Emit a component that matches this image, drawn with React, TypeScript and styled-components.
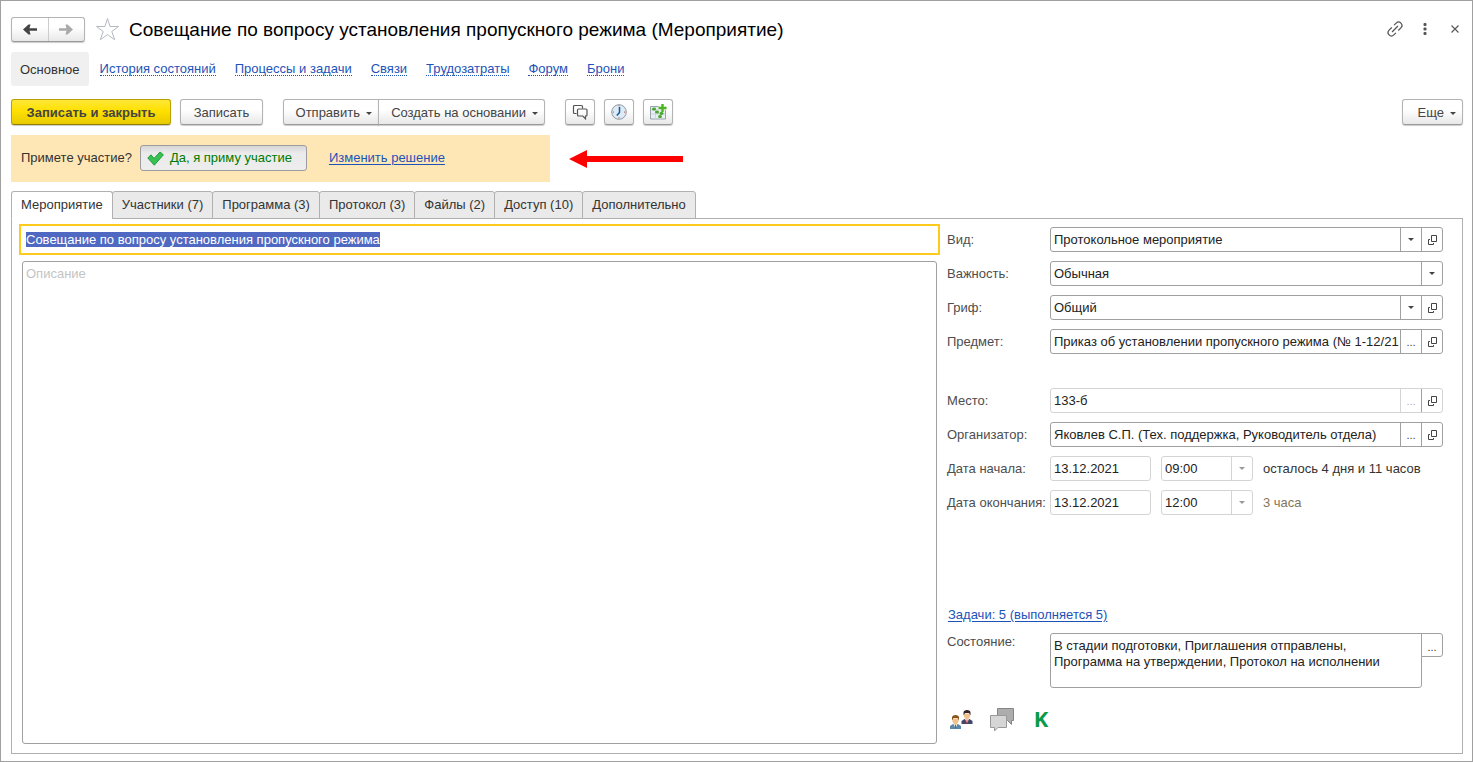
import React, { useEffect, useRef } from "react";
import styled, { createGlobalStyle, css } from "styled-components";

const GlobalStyle = createGlobalStyle`
  *, *::before, *::after { box-sizing: border-box; }
  body { margin: 0; background: #fff; }
  body, button, input, select, textarea {
    font-family: "Liberation Sans", Arial, sans-serif;
    font-size: 13px;
    line-height: 16px;
    color: #333;
  }
  button, input, select, textarea { margin: 0; border-radius: 0; outline: none; }
  svg { display: block; flex: none; }
`;

const Window = styled.div`
  display: flex;
  flex-direction: column;
  min-height: 100vh;
  padding: 16px 9px 7px 10px;
  border: 1px solid #a0a0a0;
  background: #fff;
`;

const TitleBar = styled.header`
  display: flex;
  align-items: flex-start;
  height: 25px;
  margin-right: -7px;
`;

const raised = css`
  border: 1px solid #b3b3b3;
  border-bottom-color: #999;
  border-radius: 3px;
  background: linear-gradient(#fff 40%, #e8e8e8);
  box-shadow: 0 1px 1px rgba(0, 0, 0, 0.2);
`;

const History = styled.div`
  ${raised}
  display: flex;
  width: 74px;
  height: 25px;
`;

const HistoryButton = styled.button`
  display: flex;
  flex: 1;
  align-items: center;
  justify-content: center;
  padding: 0;
  border: 0;
  background: none;
  & + & { border-left: 1px solid #ccc; }
`;

const IconButton = styled.button`
  display: flex;
  align-items: center;
  justify-content: center;
  width: 30px;
  height: 24px;
  padding: 0;
  border: 0;
  background: none;
`;

const StarButton = styled(IconButton)`
  width: 24px;
  margin: 0 10px;
`;

const Title = styled.h1`
  flex: 1;
  margin: 0;
  font-size: 19px;
  line-height: 25px;
  font-weight: 400;
  color: #000;
`;

const Nav = styled.nav`
  display: flex;
  align-items: center;
  gap: 19px;
  height: 34px;
  margin-top: 10px;
`;

const NavCurrent = styled.span`
  margin-right: -8px;
  padding: 10px 9px 8px;
  border-radius: 3px;
  background: #f0f0f0;
`;

const NavLink = styled.a`
  padding-top: 1px;
  border-bottom: 1px dotted #1d53b8;
  line-height: 12px;
  color: #1d53b8;
  text-decoration: none;
`;

const Toolbar = styled.div`
  display: flex;
  height: 26px;
  margin-top: 13px;
`;

const Button = styled.button<{ $primary?: boolean; $width: number }>`
  ${raised}
  display: flex;
  align-items: center;
  justify-content: center;
  gap: 6px;
  width: ${(p) => p.$width}px;
  padding: 2px 0 0;
  color: #444;
  white-space: nowrap;
  ${(p) =>
    p.$primary &&
    css`
      border-color: #b9a000;
      border-bottom-color: #8f7c00;
      background: linear-gradient(#ffe838, #ffe000 45%, #e8cb00);
      font-weight: 700;
    `}
`;

const MenuButton = styled(Button)`
  justify-content: flex-end;
  padding-right: 6px;
`;

const ToolButton = styled(Button)`
  padding: 0;
`;

const ToolGroup = styled.div<{ $joined?: boolean; $start?: number }>`
  display: flex;
  gap: ${(p) => (p.$joined ? 0 : 9)}px;
  margin-left: ${(p) => p.$start ?? 0}px;
  ${(p) =>
    p.$joined &&
    css`
      & > :first-child { border-radius: 3px 0 0 3px; }
      & > :last-child { border-radius: 0 3px 3px 0; margin-left: -1px; }
    `}
`;

const MoreButton = styled(MenuButton)`
  margin-left: auto;
`;

const InviteRow = styled.section`
  display: flex;
  align-items: center;
  gap: 19px;
  margin-top: 10px;
`;

const Invite = styled.div`
  display: flex;
  align-items: center;
  width: 539px;
  height: 47px;
  padding: 0 0 1px 10px;
  background: #ffe7b5;
`;

const AcceptButton = styled.button`
  display: flex;
  align-items: center;
  gap: 6px;
  width: 167px;
  height: 26px;
  margin: 0 22px 0 8px;
  padding: 0 6px;
  border: 1px solid #9c9ca0;
  border-radius: 3px;
  background: linear-gradient(#d6d6d6, #ebebeb 30%, #ededed);
  color: #007a00;
  white-space: nowrap;
`;

const Link = styled.a`
  color: #1d53b8;
  text-decoration: underline;
  text-underline-offset: 2px;
`;

const Tabs = styled.div`
  display: flex;
  height: 28px;
  margin-top: 9px;
  margin-bottom: -1px;
`;

const Tab = styled.button<{ $active?: boolean }>`
  padding: 0 9px;
  border: 1px solid #b0b0b0;
  border-bottom-color: ${(p) => (p.$active ? "#fff" : "#b0b0b0")};
  border-radius: 3px 3px 0 0;
  background: ${(p) => (p.$active ? "#fff" : "#eaeaea")};
  white-space: nowrap;
  position: relative;
  & + & { margin-left: -1px; }
`;

const Panel = styled.main`
  display: grid;
  grid-template-columns: minmax(0, 1fr) 496px;
  gap: 7px;
  flex: 1;
  padding: 5px 19px 9px 7px;
  border: 1px solid #b0b0b0;
`;

const TextColumn = styled.div`
  display: flex;
  flex-direction: column;
`;

const NameInput = styled.input`
  height: 31px;
  padding: 0 5px;
  border: 2px solid #fccb1c;
  &::selection { background: #4f69c2; color: #fff; }
`;

const Description = styled.textarea`
  flex: 1;
  margin: 6px 3px 0;
  padding: 4px 3px;
  border: 1px solid #a0a0a0;
  border-radius: 3px;
  resize: none;
  &::placeholder { color: #c4c4c4; opacity: 1; }
`;

const Details = styled.div`
  display: flex;
  flex-direction: column;
  gap: 9px;
  padding-top: 3px;
`;

const Row = styled.div<{ $spaced?: boolean; $top?: boolean }>`
  display: flex;
  align-items: ${(p) => (p.$top ? "flex-start" : "center")};
  margin-top: ${(p) => (p.$spaced ? 25 : 0)}px;
`;

const Label = styled.label`
  flex: none;
  width: 103px;
  color: #4d4d4d;
  white-space: nowrap;
`;

const Field = styled.div<{ $muted?: boolean; $width?: number }>`
  --line: ${(p) => (p.$muted ? "#d4d4d4" : "#a0a0a0")};
  display: flex;
  flex: ${(p) => (p.$width ? "none" : "1")};
  width: ${(p) => (p.$width ? p.$width + "px" : "auto")};
  min-width: 0;
  height: 25px;
  border: 1px solid var(--line);
  border-radius: 3px;
  background: #fff;
  & + & { margin-left: 10px; }
`;

const control = css`
  flex: 1;
  min-width: 0;
  width: 100%;
  padding: 0 0 0 3px;
  border: 0;
  background: none;
  color: #222;
  opacity: 1;
`;

const TextInput = styled.input`
  ${control}
`;

const SelectBox = styled.div`
  position: relative;
  display: flex;
  flex: 1;
  min-width: 0;
`;

const Select = styled.select`
  ${control}
  appearance: none;
  padding-right: 24px;
`;

const cell = css`
  display: flex;
  align-items: center;
  justify-content: center;
  width: 21px;
  padding: 0;
  border: 0;
  border-left: 1px solid var(--line);
`;

const SelectArrow = styled.span<{ $muted?: boolean }>`
  ${cell}
  position: absolute;
  top: 0;
  right: 0;
  bottom: 0;
  color: ${(p) => (p.$muted ? "#999" : "#444")};
  pointer-events: none;
`;

const CellButton = styled.button<{ $strong?: boolean }>`
  ${cell}
  flex: none;
  border-left-color: ${(p) => (p.$strong ? "#a0a0a0" : "var(--line)")};
  background: none;
  font-size: 11px;
  color: #444;
  &:disabled { color: #aaa; }
`;

const Remark = styled.span<{ $muted?: boolean }>`
  margin-left: 10px;
  color: ${(p) => (p.$muted ? "#857558" : "#333")};
  white-space: nowrap;
`;

const TasksLine = styled.div`
  margin-top: 83px;
  padding: 0 1px 1px;
`;

const StateLabel = styled(Label)`
  line-height: 18px;
`;

const StateText = styled.textarea`
  flex: 1;
  height: 55px;
  padding: 4px 3px;
  border: 1px solid #a0a0a0;
  border-radius: 3px 0 3px 3px;
  color: #222;
  resize: none;
  overflow: hidden;
`;

const StateButton = styled.button`
  width: 22px;
  height: 24px;
  margin-left: -1px;
  padding: 4px 0 0;
  border: 1px solid #a0a0a0;
  border-radius: 0 3px 3px 0;
  background: #fff;
  font-size: 11px;
`;

const Shortcuts = styled.div`
  display: flex;
  gap: 16px;
  height: 24px;
  margin-top: 11px;
  padding-left: 1px;
`;

const Shortcut = styled.button`
  display: flex;
  align-items: center;
  justify-content: center;
  width: 25px;
  height: 24px;
  padding: 0;
  border: 0;
  background: none;
`;

const BrandShortcut = styled(Shortcut)`
  align-items: flex-start;
  width: 22px;
  font-family: "Open Sans", sans-serif;
  font-size: 22px;
  line-height: 20px;
  font-weight: 700;
  color: #0b9a4b;
`;

const Caret = ({ size = 6 }: { size?: number }) => (
  <svg width={size} height="3" viewBox="0 0 6 3">
    <path d="M0 0h6L3 3z" fill="currentColor" />
  </svg>
);

const BackArrow = ({ color, flip }: { color: string; flip?: boolean }) => (
  <svg width="14" height="11" viewBox="0 0 14 11">
    <g transform={flip ? "matrix(-1 0 0 1 14 0)" : undefined}>
      <path d="M0 5.500 5.500.5h2L6.500 4.200H14v2.600H6.500l1 3.700h-2z" fill={color} />
    </g>
  </svg>
);

const StarIcon = () => (
  <svg width="24" height="24" viewBox="0 0 24 24">
    <path
      d="M12.500 1.500 15 9.500h8.500L16.800 14.500l2.900 8.300-7.200-5.200-7.200 5.200 2.900-8.300L1.500 9.500H10z"
      fill="#fff"
      stroke="#b4b8c0"
    />
  </svg>
);

const LinkIcon = () => (
  <svg width="20" height="20" viewBox="0 0 24 24" fill="none" stroke="#555" strokeWidth="1.500">
    <g transform="rotate(-45 12 12)">
      <path d="M9.500 16H6a4 4 0 0 1 0-8h4.500M14.500 8H18a4 4 0 0 1 0 8h-4.500M7 12h10" />
    </g>
  </svg>
);

const DotsIcon = () => (
  <svg width="4" height="12" viewBox="0 0 4 12" fill="#555">
    <rect x=".5" y="0" width="3" height="3" rx="1" />
    <rect x=".5" y="4.500" width="3" height="3" rx="1" />
    <rect x=".5" y="9" width="3" height="3" rx="1" />
  </svg>
);

const CloseIcon = () => (
  <svg width="8" height="8" viewBox="0 0 8 8" stroke="#555" strokeWidth="1.100">
    <path d="m.5.5 7 7m0-7-7 7" />
  </svg>
);

const ChatIcon = () => (
  <svg width="16" height="16" viewBox="0 0 16 16" fill="none" stroke="#555" strokeWidth="1.200">
    <path d="M4.500 9.500H2.500a1 1 0 0 1-1-1v-6a1 1 0 0 1 1-1h7a1 1 0 0 1 1 1v2" />
    <path d="M6.500 5h7.500a1 1 0 0 1 1 1v5a1 1 0 0 1-1 1h-.5v2.800L10.800 12H6.500a1 1 0 0 1-1-1V6a1 1 0 0 1 1-1z" />
  </svg>
);

const ClockIcon = () => (
  <svg width="16" height="16" viewBox="0 0 16 16">
    <circle cx="8" cy="8" r="7.300" fill="#dcebf5" stroke="#8d9aa5" />
    <path d="M8.500 3v5.500L5.800 11.500" fill="none" stroke="#17579c" strokeWidth="1.500" />
    <path d="M7.500 1.800h1M7.500 13.700h1M2.300 7.500v1.200M13.700 7.500v1.200" stroke="#d0453a" />
  </svg>
);

const PlanIcon = () => (
  <svg width="17" height="16" viewBox="0 0 17 16">
    <path d="M.5 2.500h15v12.500H.5z" fill="#e8eef2" stroke="#98a4ac" />
    <path d="M1 6h14M1 10h14M5.500 3v12M10.500 3v12" stroke="#cbd5db" />
    <path d="M12.500 0v9M8.500 4H17" stroke="#f4f7f8" strokeWidth="4" />
    <path d="M12.500 0v8M8.500 4h8" stroke="#4cb51d" strokeWidth="2.400" />
    <g fill="#45a52c">
      <ellipse cx="4" cy="5" rx="2" ry="1.500" />
      <ellipse cx="7" cy="8" rx="2" ry="1.500" />
      <ellipse cx="11.500" cy="9.500" rx="2" ry="1.400" />
      <ellipse cx="10" cy="12.500" rx="2" ry="1.500" />
    </g>
  </svg>
);

const CheckIcon = () => (
  <svg width="17" height="15" viewBox="0 0 17 15">
    <path
      d="M.8 7 4 3.800 7 7.500 13 1l3.400 2.800L7.300 14.200z"
      fill="#36c152"
      stroke="#249a3c"
      strokeLinejoin="round"
    />
  </svg>
);

const PointerArrow = () => (
  <svg width="114" height="18" viewBox="0 0 114 18">
    <path d="M0 9 18 0v6h96v6H18v6z" fill="#f00" />
  </svg>
);

const OpenIcon = () => (
  <svg width="9" height="10" viewBox="0 0 9 10" fill="none" stroke="#444">
    <path d="M3.500.5h5v6h-5zM2 4.500H.5v5h5V8" />
  </svg>
);

const Person = ({ x, y, hair, suit }: { x: number; y: number; hair: string; suit: string }) => (
  <g transform={`translate(${x} ${y})`}>
    <path d="M0 14v-3L3 9h5l3 2v3z" fill={suit} />
    <path d="M3.500 9h4l-2 4z" fill="#fff" />
    <path d="M5 9.500h1V13l-.5.800L5 13z" fill="#d33" />
    <path d="M2.500 3.500h6V6.500L6.800 9.500H4.200L2.500 6.500z" fill="#f3c18c" />
    <path d="M2 5.500V2.500C2 1 3.500 0 5.500 0S9 1 9 2.500v3L7.500 3h-4z" fill={hair} />
  </g>
);

const PeopleIcon = () => (
  <svg width="24" height="20" viewBox="0 0 24 20">
    <Person x={12.5} y={0} hair="#33232b" suit="#434668" />
    <Person x={1} y={5} hair="#8a5318" suit="#5f87a8" />
  </svg>
);

const DiscussionIcon = () => (
  <svg width="25" height="24" viewBox="0 0 25 24">
    <path d="M8.500.5h16v12h-2v4l-4-4h-10z" fill="#adadad" stroke="#858585" />
    <path d="M1.500 7.500h16v12H9l-3.500 3.500v-3.500h-4z" fill="#d6d6d6" stroke="#999" />
  </svg>
);

const sections = ["История состояний", "Процессы и задачи", "Связи", "Трудозатраты", "Форум", "Брони"];

const tabs = [
  "Мероприятие",
  "Участники (7)",
  "Программа (3)",
  "Протокол (3)",
  "Файлы (2)",
  "Доступ (10)",
  "Дополнительно",
];

type ChoiceProps = { id: string; value: string; disabled?: boolean; label?: string };

const Choice = ({ id, value, disabled, label }: ChoiceProps) => (
  <SelectBox>
    <Select id={id} defaultValue={value} disabled={disabled} aria-label={label}>
      <option>{value}</option>
    </Select>
    <SelectArrow $muted={disabled}>
      <Caret />
    </SelectArrow>
  </SelectBox>
);

const OpenButton = ({ strong }: { strong?: boolean }) => (
  <CellButton type="button" aria-label="Открыть" $strong={strong}>
    <OpenIcon />
  </CellButton>
);

type RefRowProps = { id: string; label: string; value: string; locked?: boolean; spaced?: boolean };

const ReferenceRow = ({ id, label, value, locked, spaced }: RefRowProps) => (
  <Row $spaced={spaced}>
    <Label htmlFor={id}>{label}</Label>
    <Field $muted={locked}>
      <TextInput id={id} defaultValue={value} readOnly={locked} />
      <CellButton type="button" disabled={locked} aria-label="Выбрать">
        ...
      </CellButton>
      <OpenButton strong={locked} />
    </Field>
  </Row>
);

const ChoiceRow = ({ id, label, value, open }: { id: string; label: string; value: string; open?: boolean }) => (
  <Row>
    <Label htmlFor={id}>{label}</Label>
    <Field>
      <Choice id={id} value={value} />
      {open && <OpenButton />}
    </Field>
  </Row>
);

type DateRowProps = { id: string; label: string; date: string; time: string; note: string; muted?: boolean };

const DateRow = ({ id, label, date, time, note, muted }: DateRowProps) => (
  <Row>
    <Label htmlFor={id}>{label}</Label>
    <Field $muted $width={101}>
      <TextInput id={id} defaultValue={date} readOnly />
    </Field>
    <Field $muted $width={92}>
      <Choice id={id + "-time"} value={time} label={label + " время"} disabled />
    </Field>
    <Remark $muted={muted}>{note}</Remark>
  </Row>
);

export default function App() {
  const nameRef = useRef<HTMLInputElement>(null);

  useEffect(() => {
    nameRef.current?.focus();
    nameRef.current?.select();
  }, []);

  return (
    <>
      <GlobalStyle />
      <Window>
        <TitleBar>
          <History>
            <HistoryButton type="button" aria-label="Назад">
              <BackArrow color="#444" />
            </HistoryButton>
            <HistoryButton type="button" aria-label="Вперед">
              <BackArrow color="#aaa" flip />
            </HistoryButton>
          </History>
          <StarButton type="button" aria-label="В избранное">
            <StarIcon />
          </StarButton>
          <Title>Совещание по вопросу установления пропускного режима (Мероприятие)</Title>
          <IconButton type="button" aria-label="Получить ссылку">
            <LinkIcon />
          </IconButton>
          <IconButton type="button" aria-label="Меню">
            <DotsIcon />
          </IconButton>
          <IconButton type="button" aria-label="Закрыть">
            <CloseIcon />
          </IconButton>
        </TitleBar>

        <Nav>
          <NavCurrent>Основное</NavCurrent>
          {sections.map((name) => (
            <NavLink key={name} href="#">
              {name}
            </NavLink>
          ))}
        </Nav>

        <Toolbar>
          <ToolGroup>
            <Button type="button" $primary $width={160}>
              Записать и закрыть
            </Button>
            <Button type="button" $width={83}>
              Записать
            </Button>
          </ToolGroup>
          <ToolGroup $joined $start={20}>
            <MenuButton type="button" $width={96}>
              Отправить <Caret />
            </MenuButton>
            <MenuButton type="button" $width={167}>
              Создать на основании <Caret />
            </MenuButton>
          </ToolGroup>
          <ToolGroup $start={20}>
            <ToolButton type="button" $width={30} aria-label="Обсуждение">
              <ChatIcon />
            </ToolButton>
            <ToolButton type="button" $width={30} aria-label="Время">
              <ClockIcon />
            </ToolButton>
            <ToolButton type="button" $width={30} aria-label="Бронирование">
              <PlanIcon />
            </ToolButton>
          </ToolGroup>
          <MoreButton type="button" $width={61}>
            Еще <Caret />
          </MoreButton>
        </Toolbar>

        <InviteRow>
          <Invite>
            <span>Примете участие?</span>
            <AcceptButton type="button">
              <CheckIcon />
              Да, я приму участие
            </AcceptButton>
            <Link href="#">Изменить решение</Link>
          </Invite>
          <PointerArrow />
        </InviteRow>

        <Tabs role="tablist">
          {tabs.map((name, i) => (
            <Tab key={name} type="button" role="tab" aria-selected={i === 0} $active={i === 0}>
              {name}
            </Tab>
          ))}
        </Tabs>

        <Panel>
          <TextColumn>
            <NameInput
              ref={nameRef}
              aria-label="Наименование"
              defaultValue="Совещание по вопросу установления пропускного режима"
            />
            <Description aria-label="Описание" placeholder="Описание" />
          </TextColumn>

          <Details>
            <ChoiceRow id="kind" label="Вид:" value="Протокольное мероприятие" open />
            <ChoiceRow id="importance" label="Важность:" value="Обычная" />
            <ChoiceRow id="stamp" label="Гриф:" value="Общий" open />
            <ReferenceRow
              id="subject"
              label="Предмет:"
              value="Приказ об установлении пропускного режима (№ 1-12/21"
            />
            <ReferenceRow id="place" label="Место:" value="133-б" locked spaced />
            <ReferenceRow
              id="organizer"
              label="Организатор:"
              value="Яковлев С.П. (Тех. поддержка, Руководитель отдела)"
            />
            <DateRow
              id="start"
              label="Дата начала:"
              date="13.12.2021"
              time="09:00"
              note="осталось 4 дня и 11 часов"
            />
            <DateRow id="end" label="Дата окончания:" date="13.12.2021" time="12:00" note="3 часа" muted />
            <TasksLine>
              <Link href="#">Задачи: 5 (выполняется 5)</Link>
            </TasksLine>
            <Row $top>
              <StateLabel htmlFor="state">Состояние:</StateLabel>
              <StateText
                id="state"
                readOnly
                defaultValue={"В стадии подготовки, Приглашения отправлены,\nПрограмма на утверждении, Протокол на исполнении"}
              />
              <StateButton type="button" aria-label="Выбрать состояние">
                ...
              </StateButton>
            </Row>
            <Shortcuts>
              <Shortcut type="button" aria-label="Участники">
                <PeopleIcon />
              </Shortcut>
              <Shortcut type="button" aria-label="Обсуждения">
                <DiscussionIcon />
              </Shortcut>
              <BrandShortcut type="button">K</BrandShortcut>
            </Shortcuts>
          </Details>
        </Panel>
      </Window>
    </>
  );
}
